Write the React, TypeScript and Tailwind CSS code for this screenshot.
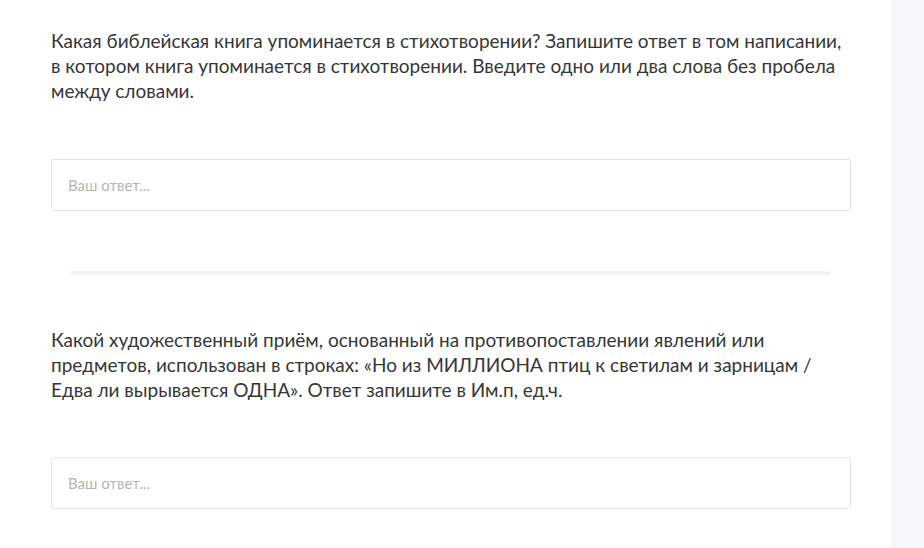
import React from "react";

export default function App() {
  const font = { fontFamily: "Lato, 'Noto Sans', sans-serif" };
  return (
    <div className="flex w-[924px] h-[548px] overflow-hidden bg-[#f5f6fa]" style={font}>
      <div className="w-[891px] h-full bg-white pl-[51px] pt-[28px]">
        <div className="w-[800px]">
          <p className="text-[19px] leading-[25px] text-[#363636] whitespace-nowrap">
            Какая библейская книга упоминается в стихотворении? Запишите ответ в том написании,
            <br />
            в котором книга упоминается в стихотворении. Введите одно или два слова без пробела
            <br />
            между словами.
          </p>
          <input
            type="text"
            placeholder="Ваш ответ..."
            className="mt-[56px] block w-full h-[52px] border border-[#e4e4e4] rounded-[3px] px-[16px] text-[15px] text-[#333333] placeholder:text-[#b5b5b5] outline-none"
          />
          <div className="mx-[20px] mt-[60px] h-[4px] bg-[#f4f4f5]" />
          <p className="mt-[52px] text-[19px] leading-[25px] text-[#363636] whitespace-nowrap">
            Какой художественный приём, основанный на противопоставлении явлений или
            <br />
            предметов, использован в строках: «Но из МИЛЛИОНА птиц к светилам и зарницам /
            <br />
            Едва ли вырывается ОДНА». Ответ запишите в Им.п, ед.ч.
          </p>
          <input
            type="text"
            placeholder="Ваш ответ..."
            className="mt-[55px] block w-full h-[52px] border border-[#e4e4e4] rounded-[3px] px-[16px] text-[15px] text-[#333333] placeholder:text-[#b5b5b5] outline-none"
          />
        </div>
      </div>
    </div>
  );
}
